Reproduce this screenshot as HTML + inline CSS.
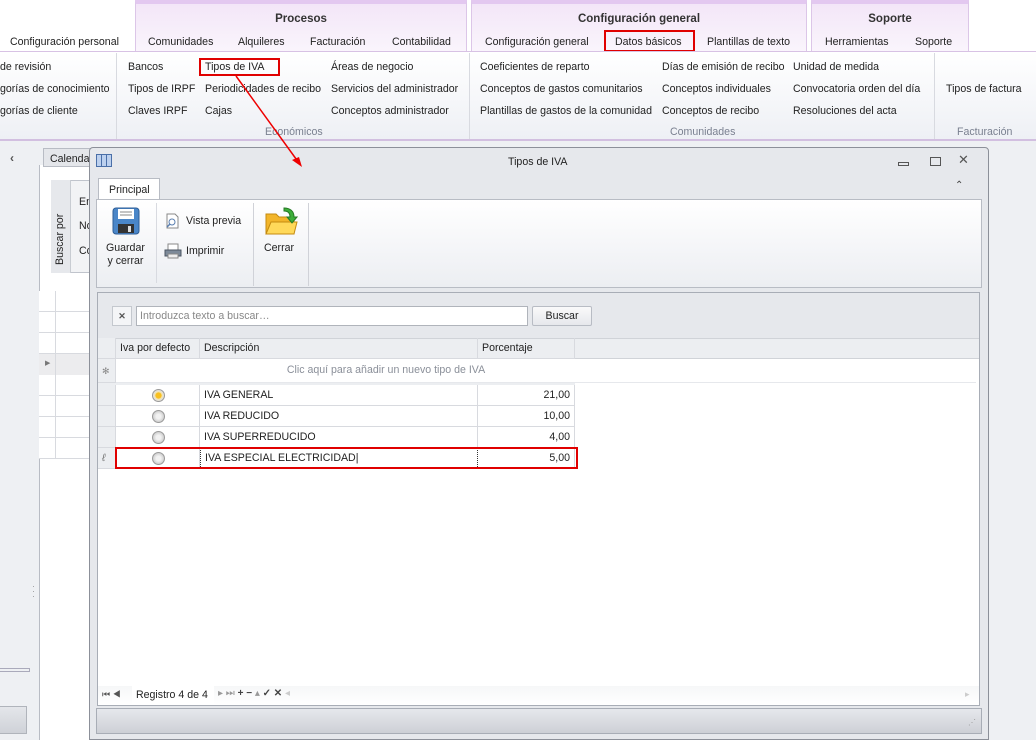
<!DOCTYPE html>
<html><head><meta charset="utf-8"><style>
*{margin:0;padding:0;box-sizing:border-box}
body{width:1036px;height:740px;overflow:hidden;background:#eef0f3;font-family:"Liberation Sans",sans-serif;font-size:10.6px;color:#222;position:relative}
.a{position:absolute;white-space:nowrap}
.grp{position:absolute;top:0;height:52px;background:linear-gradient(#f3e6f8,#faf5fc);border-top:4px solid #e3c8f0;border-left:1px solid #dcc6e8;border-right:1px solid #dcc6e8}
.gt{position:absolute;top:9px;width:100%;text-align:center;font-weight:bold;font-size:11.5px;color:#333}
.red{position:absolute;border:2px solid #e00000}
.cell{position:absolute;border-right:1px solid #d8dadf;border-bottom:1px solid #d8dadf;height:21px;line-height:21px;padding:0 4px}
.radio{position:absolute;width:13px;height:13px;border-radius:50%;border:1px solid #9a9a9a;background:radial-gradient(#f2f2f2 30%,#cfcfcf 70%)}
</style></head><body>
<div class="a" style="left:0;top:0;width:1036px;height:52px;background:#fff"></div>
<div class="grp" style="left:135px;width:332px"><div class="gt">Procesos</div></div>
<div class="grp" style="left:471px;width:336px"><div class="gt">Configuración general</div></div>
<div class="grp" style="left:811px;width:158px"><div class="gt">Soporte</div></div>
<div class="a" style="left:10px;top:36px">Configuración personal</div>
<div class="a" style="left:148px;top:36px">Comunidades</div>
<div class="a" style="left:238px;top:36px">Alquileres</div>
<div class="a" style="left:310px;top:36px">Facturación</div>
<div class="a" style="left:392px;top:36px">Contabilidad</div>
<div class="a" style="left:485px;top:36px">Configuración general</div>
<div class="a" style="left:615px;top:36px">Datos básicos</div>
<div class="red" style="left:604px;top:30px;width:91px;height:22px"></div>
<div class="a" style="left:707px;top:36px">Plantillas de texto</div>
<div class="a" style="left:825px;top:36px">Herramientas</div>
<div class="a" style="left:915px;top:36px">Soporte</div>
<div class="a" style="left:0;top:51px;width:1036px;height:90px;background:linear-gradient(#fff,#eef0f5);border-top:1px solid #d8c2e4;border-bottom:2px solid #d2bfe0"></div>
<div class="a" style="left:116px;top:53px;width:1px;height:86px;background:#d8dae0"></div>
<div class="a" style="left:469px;top:53px;width:1px;height:86px;background:#d8dae0"></div>
<div class="a" style="left:934px;top:53px;width:1px;height:86px;background:#d8dae0"></div>
<div class="a" style="left:0;top:61px">de revisión</div>
<div class="a" style="left:0;top:83px">gorías de conocimiento</div>
<div class="a" style="left:0;top:105px">gorías de cliente</div>
<div class="a" style="left:128px;top:61px">Bancos</div>
<div class="a" style="left:128px;top:83px">Tipos de IRPF</div>
<div class="a" style="left:128px;top:105px">Claves IRPF</div>
<div class="a" style="left:205px;top:61px">Tipos de IVA</div>
<div class="red" style="left:199px;top:58px;width:81px;height:18px"></div>
<div class="a" style="left:205px;top:83px">Periodicidades de recibo</div>
<div class="a" style="left:205px;top:105px">Cajas</div>
<div class="a" style="left:331px;top:61px">Áreas de negocio</div>
<div class="a" style="left:331px;top:83px">Servicios del administrador</div>
<div class="a" style="left:331px;top:105px">Conceptos administrador</div>
<div class="a" style="left:265px;top:126px;color:#7a8090">Económicos</div>
<div class="a" style="left:480px;top:61px">Coeficientes de reparto</div>
<div class="a" style="left:480px;top:83px">Conceptos de gastos comunitarios</div>
<div class="a" style="left:480px;top:105px">Plantillas de gastos de la comunidad</div>
<div class="a" style="left:662px;top:61px">Días de emisión de recibo</div>
<div class="a" style="left:662px;top:83px">Conceptos individuales</div>
<div class="a" style="left:662px;top:105px">Conceptos de recibo</div>
<div class="a" style="left:793px;top:61px">Unidad de medida</div>
<div class="a" style="left:793px;top:83px">Convocatoria orden del día</div>
<div class="a" style="left:793px;top:105px">Resoluciones del acta</div>
<div class="a" style="left:670px;top:126px;color:#7a8090">Comunidades</div>
<div class="a" style="left:946px;top:83px">Tipos de factura</div>
<div class="a" style="left:957px;top:126px;color:#7a8090">Facturación</div>
<div class="a" style="left:10px;top:151px;font-size:12px;font-weight:bold;color:#555">‹</div>
<div class="a" style="left:0;top:668px;width:30px;height:4px;border:1px solid #aab;border-left:none"></div>
<div class="a" style="left:0;top:706px;width:27px;height:28px;background:linear-gradient(#e4e6ea,#cfd2d8);border:1px solid #b0b4bb;border-left:none"></div>
<div class="a" style="left:32px;top:584px;color:#999;line-height:5px;font-size:9px">·<br>·<br>·</div>
<div class="a" style="left:39px;top:165px;width:60px;height:575px;border-left:1px solid #b8bcc4;background:#fff"></div>
<div class="a" style="left:43px;top:148px;width:50px;height:19px;background:#e4e6ea;border:1px solid #b8bcc4;padding:4px 6px">Calenda</div>
<div class="a" style="left:51px;top:180px;width:50px;height:93px;border:1px solid #c0c4cc;background:#f2f3f5"></div>
<div class="a" style="left:51px;top:180px;width:20px;height:93px;background:#e6e8ec;border-right:1px solid #c8ccd2"></div>
<div class="a" style="left:54px;top:265px;transform:rotate(-90deg);transform-origin:0 0;">Buscar por</div>
<div class="a" style="left:79px;top:196px">En</div>
<div class="a" style="left:79px;top:220px">No</div>
<div class="a" style="left:79px;top:245px">Co</div>
<div class="a" style="left:39px;top:291px;width:60px;height:168px;background:repeating-linear-gradient(#fff 0 20px,#d8dadf 20px 21px)"></div>
<div class="a" style="left:39px;top:354px;width:60px;height:21px;background:#ececee"></div>
<div class="a" style="left:55px;top:291px;width:1px;height:168px;background:#d8dadf"></div>
<div class="a" style="left:45px;top:359px;font-size:7px;color:#777">▶</div>
<div class="a" style="left:89px;top:147px;width:900px;height:593px;background:#e6e8ec;border:1px solid #8c9099;border-radius:4px 4px 0 0"></div>
<div class="a" style="left:96px;top:154px;width:16px;height:13px;border:1px solid #4a6fa8;background:repeating-linear-gradient(90deg,#bcd0ee 0 4px,#4a6fa8 4px 5px),#bcd0ee"></div>
<div class="a" style="left:508px;top:156px">Tipos de IVA</div>
<div class="a" style="left:898px;top:162px;width:11px;height:4px;border:1px solid #555"></div>
<div class="a" style="left:930px;top:157px;width:11px;height:9px;border:1px solid #555"></div>
<div class="a" style="left:958px;top:152px;font-size:13px;color:#555">✕</div>
<div class="a" style="left:955px;top:180px;font-size:10px;color:#444">⌃</div>
<div class="a" style="left:98px;top:178px;width:62px;height:23px;background:#fff;border:1px solid #b8bcc4;border-bottom:none;padding:5px 10px">Principal</div>
<div class="a" style="left:96px;top:199px;width:886px;height:89px;background:linear-gradient(#fff,#eceef2);border:1px solid #b8bcc4"></div>
<div class="a" style="left:156px;top:203px;width:1px;height:80px;background:#d8dae0"></div>
<div class="a" style="left:253px;top:203px;width:1px;height:83px;background:#d0d2d8"></div>
<div class="a" style="left:308px;top:203px;width:1px;height:83px;background:#d0d2d8"></div>
<svg class="a" style="left:112px;top:207px" width="28" height="28"><rect x="1" y="1" width="26" height="26" rx="3" fill="#4a86c8" stroke="#2d5d96"/><rect x="6" y="2" width="16" height="10" fill="#fff"/><line x1="8" y1="5" x2="20" y2="5" stroke="#888"/><line x1="8" y1="8" x2="20" y2="8" stroke="#888"/><rect x="6" y="17" width="16" height="9" fill="#333"/><rect x="16" y="19" width="3" height="6" fill="#ddd"/></svg>
<div class="a" style="left:106px;top:242px;text-align:center;line-height:13px">Guardar<br>y cerrar</div>
<svg class="a" style="left:165px;top:213px" width="15" height="16"><path d="M2 1h8l3 3v11H2z" fill="#fff" stroke="#888"/><circle cx="7" cy="9" r="3" fill="none" stroke="#5a7fb0"/><line x1="5" y1="11" x2="2" y2="14" stroke="#5a7fb0" stroke-width="1.5"/></svg>
<div class="a" style="left:186px;top:215px">Vista previa</div>
<svg class="a" style="left:164px;top:243px" width="18" height="16"><rect x="4" y="1" width="10" height="6" fill="#fff" stroke="#888"/><path d="M1 7h16v6H1z" fill="#7d8a99" stroke="#4c5663"/><rect x="4" y="11" width="10" height="4" fill="#eee" stroke="#888"/></svg>
<div class="a" style="left:186px;top:245px">Imprimir</div>
<svg class="a" style="left:264px;top:204px" width="34" height="32"><path d="M2 10h10l3 3h15v17H2z" fill="#f2b52a" stroke="#c48a10"/><path d="M2 30l5-12h26l-3 12z" fill="#ffd95a" stroke="#c48a10"/><path d="M20 4c6 0 10 3 10 9l3 0-5 6-5-6 3 0c0-4-2-6-6-6z" fill="#3cae3a" stroke="#267a24"/></svg>
<div class="a" style="left:264px;top:242px">Cerrar</div>
<div class="a" style="left:97px;top:292px;width:883px;height:414px;background:#fff;border:1px solid #a8adb6"></div>
<div class="a" style="left:98px;top:293px;width:881px;height:45px;background:#e6e8ec"></div>
<div class="a" style="left:112px;top:306px;width:20px;height:20px;border:1px solid #c4c8ce;background:#f4f5f7;text-align:center;line-height:18px;font-size:9px;font-weight:bold;color:#555">✕</div>
<div class="a" style="left:136px;top:306px;width:392px;height:20px;border:1px solid #b0b4bb;background:#fff;color:#888;padding:3px 3px">Introduzca texto a buscar…</div>
<div class="a" style="left:532px;top:306px;width:60px;height:20px;border:1px solid #b8bcc4;border-radius:2px;background:linear-gradient(#fafafa,#e6e8ec);text-align:center;line-height:18px">Buscar</div>
<div class="a" style="left:98px;top:338px;width:881px;height:21px;background:#eceef1;border-top:1px solid #d0d3d8;border-bottom:1px solid #d0d3d8"></div>
<div class="cell" style="left:98px;top:338px;width:18px;background:#eceef1"></div>
<div class="cell" style="left:116px;top:338px;width:84px">Iva por defecto</div>
<div class="cell" style="left:200px;top:338px;width:278px">Descripción</div>
<div class="cell" style="left:478px;top:338px;width:97px">Porcentaje</div>
<div class="cell" style="left:98px;top:359px;width:18px;height:24px;background:#eceef1;color:#888;font-size:9px;padding:2px 4px">✻</div>
<div class="a" style="left:116px;top:359px;width:860px;height:24px;text-align:center;line-height:22px;color:#8a8f99;border-bottom:1px solid #e6e8ec;padding-right:320px">Clic aquí para añadir un nuevo tipo de IVA</div>
<div class="a" style="left:98px;top:383px;width:477px;height:2px;background:#eceef1"></div>
<div class="cell" style="left:98px;top:385px;width:18px;background:#eceef1"></div><div class="cell" style="left:116px;top:385px;width:84px"></div><div class="cell" style="left:200px;top:385px;width:278px">IVA GENERAL</div><div class="cell" style="left:478px;top:385px;width:97px;text-align:right">21,00</div>
<div class="cell" style="left:98px;top:406px;width:18px;background:#eceef1"></div><div class="cell" style="left:116px;top:406px;width:84px"></div><div class="cell" style="left:200px;top:406px;width:278px">IVA REDUCIDO</div><div class="cell" style="left:478px;top:406px;width:97px;text-align:right">10,00</div>
<div class="cell" style="left:98px;top:427px;width:18px;background:#eceef1"></div><div class="cell" style="left:116px;top:427px;width:84px"></div><div class="cell" style="left:200px;top:427px;width:278px">IVA SUPERREDUCIDO</div><div class="cell" style="left:478px;top:427px;width:97px;text-align:right">4,00</div>
<div class="cell" style="left:98px;top:448px;width:18px;background:#eceef1;color:#777;font-style:italic">ℓ</div><div class="cell" style="left:116px;top:448px;width:84px"></div><div class="cell" style="left:200px;top:448px;width:278px;border-left:1px dotted #333;border-right:1px dotted #333">IVA ESPECIAL ELECTRICIDAD|</div><div class="cell" style="left:478px;top:448px;width:97px;text-align:right">5,00</div>
<div class="red" style="left:115px;top:447px;width:463px;height:22px"></div>
<div class="radio" style="left:152px;top:389px;background:radial-gradient(#f8c020 35%,#f4e4b0 45%,#e0e0e0 70%)"></div>
<div class="radio" style="left:152px;top:410px"></div>
<div class="radio" style="left:152px;top:431px"></div>
<div class="radio" style="left:152px;top:452px"></div>
<div class="a" style="left:98px;top:686px;width:881px;height:19px;background:linear-gradient(#f6f7f8,#fff)"></div>
<div class="a" style="left:102px;top:689px;font-size:9px;color:#555">⏮ ◀</div>
<div class="a" style="left:132px;top:686px;width:82px;height:19px;background:#fff;padding:3px 4px">Registro 4 de 4</div>
<div class="a" style="left:218px;top:688px;font-size:10px;color:#999">▸ ⏭ <b style="color:#444">+</b> <b style="color:#444">−</b> ▴ <b style="color:#444">✓</b> <b style="color:#444">✕</b> <span style="color:#ccc">◂</span></div>
<div class="a" style="left:965px;top:689px;font-size:9px;color:#ccc">▸</div>
<div class="a" style="left:96px;top:708px;width:886px;height:26px;background:linear-gradient(#e6e8ec,#cdd0d6);border:1px solid #a8adb6"></div>
<div class="a" style="left:968px;top:718px;font-size:8px;color:#999">⋰</div>
<svg class="a" style="left:0;top:0" width="1036" height="740"><line x1="236" y1="76" x2="299" y2="163" stroke="#e00" stroke-width="1.5"/><polygon points="302,167 292,160 299,157" fill="#e00"/></svg>
</body></html>
